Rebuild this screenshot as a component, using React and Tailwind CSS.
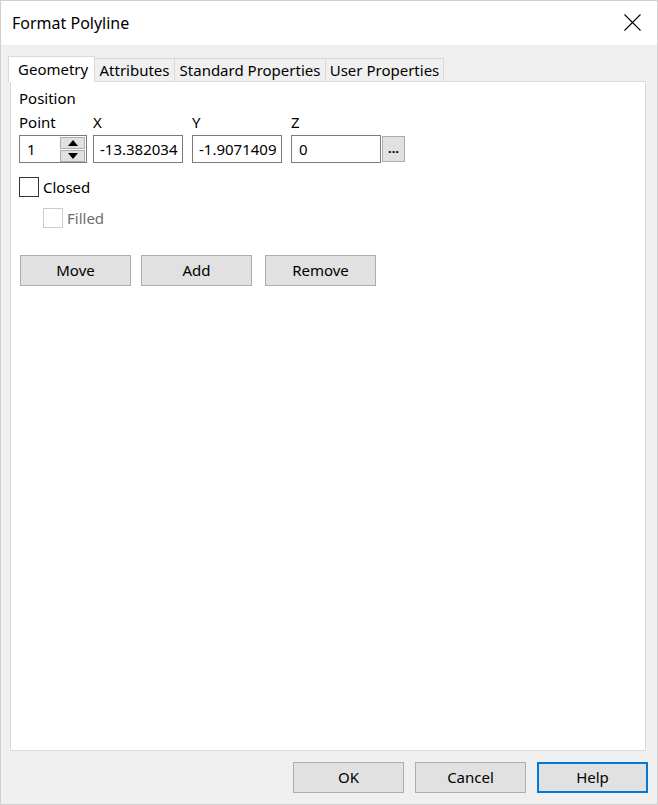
export default function App() {
  const font = { fontFamily: '"Noto Sans", "Segoe UI", sans-serif' }
  return (
    <div
      className="w-[658px] h-[805px] border border-[#d0d0d0] bg-[#f0f0f0] flex flex-col text-[15px] text-black overflow-hidden"
      style={font}
    >
      {/* Title bar */}
      <div className="h-[44px] bg-white flex items-center justify-between pl-[11px] pr-[16px] shrink-0">
        <span className="text-[16px] leading-none">Format Polyline</span>
        <svg width="17" height="17" viewBox="0 0 17 17" className="-mt-[1px]">
          <path d="M0.5 0.5 L16.5 16.5 M16.5 0.5 L0.5 16.5" stroke="#000" strokeWidth="1.1" fill="none" />
        </svg>
      </div>

      {/* Tabs */}
      <div className="mt-[11px] pl-[7px] flex items-end h-[25px] relative z-10 whitespace-nowrap">
        <div className="h-[26px] -mb-px bg-white border border-b-0 border-[#d9d9d9] px-[9px] flex items-center w-[87px]">
          Geometry
        </div>
        <div className="h-[23px] border border-l-0 border-b-0 border-[#d9d9d9] flex items-center w-[80px] justify-center">
          Attributes
        </div>
        <div className="h-[23px] border border-l-0 border-b-0 border-[#d9d9d9] flex items-center w-[151px] justify-center">
          Standard Properties
        </div>
        <div className="h-[23px] border border-l-0 border-b-0 border-[#d9d9d9] flex items-center w-[118px] justify-center">
          User Properties
        </div>
      </div>

      {/* Panel */}
      <div className="ml-[9px] w-[636px] h-[670px] bg-white border border-[#d9d9d9] pl-[8px] pt-[6px]">
        <div className="leading-[20px]">Position</div>
        <div className="flex mt-[4px] leading-[20px]">
          <span className="w-[74px]">Point</span>
          <span className="w-[99px]">X</span>
          <span className="w-[99px]">Y</span>
          <span>Z</span>
        </div>
        <div className="flex items-center mt-[3px] h-[28px]">
          {/* Spin box */}
          <div className="w-[68px] h-[28px] border border-[#7a7a7a] flex items-center">
            <span className="pl-[7px] flex-1">1</span>
            <div className="flex flex-col gap-[1px] mr-[1px]">
              <div className="w-[25px] h-[12px] bg-[#e1e1e1] border border-[#adadad] flex items-center justify-center">
                <svg width="10" height="6" viewBox="0 0 10 6"><path d="M5 0 L10 6 L0 6 Z" fill="#000" /></svg>
              </div>
              <div className="w-[25px] h-[12px] bg-[#e1e1e1] border border-[#adadad] flex items-center justify-center">
                <svg width="10" height="6" viewBox="0 0 10 6"><path d="M0 0 L10 0 L5 6 Z" fill="#000" /></svg>
              </div>
            </div>
          </div>
          <div className="ml-[6px] w-[90px] h-[28px] border border-[#7a7a7a] pl-[6px] flex items-center overflow-hidden whitespace-nowrap">
            -13.382034
          </div>
          <div className="ml-[9px] w-[90px] h-[28px] border border-[#7a7a7a] pl-[6px] flex items-center overflow-hidden whitespace-nowrap">
            -1.9071409
          </div>
          <div className="ml-[9px] w-[90px] h-[28px] border border-[#7a7a7a] pl-[7px] flex items-center">0</div>
          <div className="ml-px w-[23px] h-[26px] bg-[#e1e1e1] border border-[#adadad] flex items-center justify-center text-[13px] font-bold leading-none pb-[2px]">
            ...
          </div>
        </div>

        {/* Checkboxes */}
        <div className="flex items-center mt-[14px] h-[20px]">
          <div className="w-[20px] h-[20px] border border-[#333]" />
          <span className="ml-[4px] leading-none">Closed</span>
        </div>
        <div className="flex items-center mt-[11px] ml-[24px] h-[20px]">
          <div className="w-[20px] h-[20px] border border-[#cccccc]" />
          <span className="ml-[4px] leading-none text-[#6d6d6d]">Filled</span>
        </div>

        {/* Action buttons */}
        <div className="flex mt-[27px] ml-px gap-[10px]">
          <button className="w-[111px] h-[31px] bg-[#e1e1e1] border border-[#adadad]">Move</button>
          <button className="w-[111px] h-[31px] bg-[#e1e1e1] border border-[#adadad]">Add</button>
          <button className="ml-[3px] w-[111px] h-[31px] bg-[#e1e1e1] border border-[#adadad]">Remove</button>
        </div>
      </div>

      {/* Footer */}
      <div className="flex justify-end gap-[11px] pr-[9px] mt-[11px]">
        <button className="w-[111px] h-[31px] bg-[#e1e1e1] border border-[#adadad]">OK</button>
        <button className="w-[111px] h-[31px] bg-[#e1e1e1] border border-[#adadad]">Cancel</button>
        <button className="w-[111px] h-[31px] bg-[#e1e1e1] border-2 border-[#0078d7]">Help</button>
      </div>
    </div>
  )
}
